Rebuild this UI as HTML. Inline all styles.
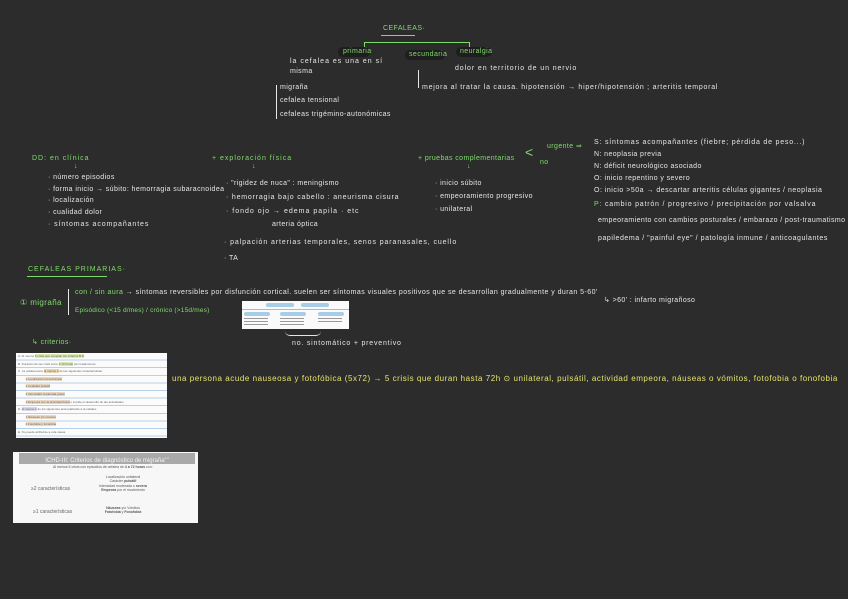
<!DOCTYPE html>
<html><head><meta charset="utf-8"><style>
body{margin:0;width:848px;height:599px;background:#2c2c2c;overflow:hidden;position:relative;font-family:"Liberation Sans",sans-serif;}
.t{position:absolute;white-space:nowrap;color:#e6e6e6;font-size:7px;line-height:8px;letter-spacing:0.4px}
.g{color:#7fdc6a}
.y{color:#e8e46a;font-size:8px;letter-spacing:0.55px}
.l{position:absolute;background:#7fdc6a}
.w{position:absolute;background:#e6e6e6}
.pill{position:absolute;background:#1e1e1e;border-radius:5px}
</style></head><body>

<div class="t g" style="left:383px;top:25px;">CEFALEAS·</div>
<div class="l" style="left:381px;top:35px;width:34px;height:1px"></div>
<div class="l" style="left:364px;top:42px;width:106px;height:1px"></div>
<div class="l" style="left:364px;top:42px;width:1px;height:5px"></div>
<div class="l" style="left:469px;top:42px;width:1px;height:5px"></div>
<div class="pill" style="left:338px;top:47px;width:32px;height:10px"></div>
<div class="pill" style="left:405px;top:50px;width:40px;height:10px"></div>
<div class="pill" style="left:456px;top:47px;width:36px;height:10px"></div>
<div class="t g" style="left:343px;top:48px;">primaria</div>
<div class="t g" style="left:409px;top:51px;">secundaria</div>
<div class="t g" style="left:460px;top:48px;">neuralgia</div>
<div class="t" style="left:290px;top:58px;letter-spacing:1px">la cefalea es una en sí</div>
<div class="t" style="left:290px;top:68px;">misma</div>
<div class="t" style="left:455px;top:65px;letter-spacing:0.9px">dolor en territorio de un nervio</div>
<div class="w" style="left:276px;top:85px;width:1px;height:34px"></div>
<div class="t" style="left:280px;top:84px;">migraña</div>
<div class="t" style="left:280px;top:97px;">cefalea tensional</div>
<div class="t" style="left:280px;top:111px;">cefaleas trigémino-autonómicas</div>
<div class="w" style="left:418px;top:70px;width:1px;height:18px"></div>
<div class="t" style="left:422px;top:84px;letter-spacing:0.75px">mejora al tratar la causa. hipotensión → hiper/hipotensión ; arteritis temporal</div>

<div class="t g" style="left:32px;top:155px;letter-spacing:1px">DD: en clínica</div>
<div class="t g" style="left:74px;top:163px;">↓</div>
<div class="t" style="left:48px;top:174px;">· número episodios</div>
<div class="t" style="left:48px;top:186px;">· forma inicio → súbito: hemorragia subaracnoidea</div>
<div class="t" style="left:48px;top:197px;">· localización</div>
<div class="t" style="left:48px;top:209px;">· cualidad dolor</div>
<div class="t" style="left:48px;top:221px;letter-spacing:0.9px">· síntomas acompañantes</div>

<div class="t g" style="left:212px;top:155px;letter-spacing:1px">+ exploración física</div>
<div class="t g" style="left:252px;top:163px;">↓</div>
<div class="t" style="left:226px;top:180px;">· "rigidez de nuca" : meningismo</div>
<div class="t" style="left:226px;top:194px;letter-spacing:0.8px">· hemorragia bajo cabello : aneurisma cisura</div>
<div class="t" style="left:226px;top:208px;letter-spacing:1px">· fondo ojo → edema papila · etc</div>
<div class="t" style="left:272px;top:221px;">arteria óptica</div>
<div class="t" style="left:224px;top:239px;letter-spacing:0.9px">· palpación arterias temporales, senos paranasales, cuello</div>
<div class="t" style="left:224px;top:255px;">· TA</div>

<div class="t g" style="left:418px;top:155px;">+ pruebas complementarias</div>
<div class="t g" style="left:547px;top:143px;">urgente ⇒</div>
<div class="t g" style="left:540px;top:159px;">no</div>
<div class="t g" style="left:525px;top:148px;font-size:14px">&lt;</div>
<div class="t g" style="left:467px;top:163px;">↓</div>
<div class="t" style="left:435px;top:180px;">· inicio súbito</div>
<div class="t" style="left:435px;top:193px;">· empeoramiento progresivo</div>
<div class="t" style="left:435px;top:206px;">· unilateral</div>

<div class="t" style="left:594px;top:139px;letter-spacing:0.8px">S: síntomas acompañantes (fiebre; pérdida de peso...)</div>
<div class="t" style="left:594px;top:151px;">N: neoplasia previa</div>
<div class="t" style="left:594px;top:163px;">N: déficit neurológico asociado</div>
<div class="t" style="left:594px;top:175px;">O: inicio repentino y severo</div>
<div class="t" style="left:594px;top:187px;letter-spacing:0.5px">O: inicio &gt;50a → descartar arteritis células gigantes / neoplasia</div>
<div class="t" style="left:594px;top:201px;letter-spacing:0.8px"><span class="g">P:</span> cambio patrón / progresivo / precipitación por valsalva</div>
<div class="t" style="left:598px;top:217px;letter-spacing:0.4px">empeoramiento con cambios posturales / embarazo / post-traumatismo</div>
<div class="t" style="left:598px;top:235px;letter-spacing:0.55px">papiledema / "painful eye" / patología inmune / anticoagulantes</div>

<div class="t g" style="left:28px;top:266px;letter-spacing:1px">CEFALEAS PRIMARIAS·</div>
<div class="l" style="left:27px;top:276px;width:80px;height:1px"></div>

<div class="t g" style="left:20px;top:299px;font-size:8px">① migraña</div>
<div class="w" style="left:68px;top:289px;width:1px;height:26px"></div>
<div class="t" style="left:75px;top:289px;letter-spacing:0.45px"><span class="g">con / sin aura</span> → síntomas reversibles por disfunción cortical. suelen ser síntomas visuales positivos que se desarrollan gradualmente y duran 5-60'</div>
<div class="t g" style="left:75px;top:307px;letter-spacing:0.2px;font-size:6.5px">Episódico (&lt;15 d/mes) / crónico (&gt;15d/mes)</div>
<div class="t" style="left:604px;top:297px;">↳ &gt;60' : infarto migrañoso</div>

<div style="position:absolute;left:242px;top:301px;width:107px;height:28px;background:#fafafa">
 <div style="position:absolute;left:24px;top:2px;width:28px;height:4px;background:#a8cde6;border-radius:2px"></div>
 <div style="position:absolute;left:59px;top:2px;width:28px;height:4px;background:#a8cde6;border-radius:2px"></div>
 <div style="position:absolute;left:0;top:8px;width:107px;height:1px;background:#e8a0a0"></div>
 <div style="position:absolute;left:2px;top:11px;width:26px;height:4px;background:#a8cde6;border-radius:2px"></div>
 <div style="position:absolute;left:38px;top:11px;width:26px;height:4px;background:#a8cde6;border-radius:2px"></div>
 <div style="position:absolute;left:76px;top:11px;width:26px;height:4px;background:#a8cde6;border-radius:2px"></div>
 <div style="position:absolute;left:2px;top:17px;width:24px;height:8px;background:repeating-linear-gradient(#999 0 1px,transparent 1px 3px)"></div>
 <div style="position:absolute;left:38px;top:17px;width:24px;height:8px;background:repeating-linear-gradient(#999 0 1px,transparent 1px 3px)"></div>
 <div style="position:absolute;left:76px;top:17px;width:24px;height:6px;background:repeating-linear-gradient(#999 0 1px,transparent 1px 3px)"></div>
</div>
<div style="position:absolute;left:285px;top:331px;width:36px;height:4px;border-bottom:1px solid #e6e6e6;border-radius:0 0 18px 18px"></div>
<div class="t" style="left:292px;top:340px;letter-spacing:0.8px">no. sintomático + preventivo</div>

<div class="t g" style="left:32px;top:339px;">↳ criterios·</div>

<div style="position:absolute;left:16px;top:353px;width:151px;height:85px;background:#fbfbfb;background-image:repeating-linear-gradient(transparent 0 6.6px,#b8cfe8 6.6px 7.6px);">
 <div class="t" style="left:2px;top:0;font-size:3px;line-height:7.6px;color:#666;letter-spacing:0">A. Al menos <span style="background:#d8eab0">5 crisis que cumplan los criterios B-D</span><br>B. Duración de las crisis entre <span style="background:#d8eab0">4-72 horas</span> (sin tratamiento)<br>C. La cefalea tiene <span style="background:#e8d8b0">al menos 2</span> de las siguientes características:<br>&nbsp;&nbsp;&nbsp;&nbsp;&nbsp;&nbsp;&nbsp;&nbsp;&nbsp;<span style="background:#ead8c0">1 Localización hemicraneal</span><br>&nbsp;&nbsp;&nbsp;&nbsp;&nbsp;&nbsp;&nbsp;&nbsp;&nbsp;<span style="background:#ead8c0">2 Cualidad pulsátil</span><br>&nbsp;&nbsp;&nbsp;&nbsp;&nbsp;&nbsp;&nbsp;&nbsp;&nbsp;<span style="background:#ead8c0">3 Intensidad moderada-grave</span><br>&nbsp;&nbsp;&nbsp;&nbsp;&nbsp;&nbsp;&nbsp;&nbsp;&nbsp;<span style="background:#ead8c0">4 Empeora con la actividad física</span> o impide el desarrollo de las actividades<br>D. <span style="background:#d8d8ea">Al menos 1</span> de los siguientes acompañando a la cefalea:<br>&nbsp;&nbsp;&nbsp;&nbsp;&nbsp;&nbsp;&nbsp;&nbsp;&nbsp;<span style="background:#ead8c0">1 Náuseas y/o vómitos</span><br>&nbsp;&nbsp;&nbsp;&nbsp;&nbsp;&nbsp;&nbsp;&nbsp;&nbsp;<span style="background:#ead8c0">2 Fotofobia y fonofobia</span><br>E. No puede atribuirse a otra causa</div>
</div>

<div class="t y" style="left:172px;top:375px;">una persona acude nauseosa y fotofóbica (5x72) → 5 crisis que duran hasta 72h ⊙ unilateral, pulsátil, actividad empeora, náuseas o vómitos, fotofobia o fonofobia</div>

<div style="position:absolute;left:13px;top:452px;width:185px;height:71px;background:#f7f7f7">
 <div style="position:absolute;left:6px;top:1px;width:176px;height:11px;background:#a9a9a9;color:#f4f4f4;font-size:6px;line-height:11px;text-align:center;white-space:nowrap">ICHD-III: Criterios de diagnóstico de migraña<sup style="font-size:3px">1,2</sup></div>
 <div style="position:absolute;left:40px;top:13px;font-size:3.5px;color:#555;white-space:nowrap">Al menos 5 crisis con episodios de cefalea de <b>4 a 72 horas</b> con:</div>
 <div style="position:absolute;left:18px;top:34px;font-size:5px;color:#666;white-space:nowrap">≥2 características</div>
 <div style="position:absolute;left:75px;top:23px;font-size:3.5px;color:#555;line-height:4.4px;text-align:center;width:70px">Localización unilateral<br>Carácter <b>pulsátil</b><br>Intensidad moderada o <b>severa</b><br><b>Empeora</b> por el movimiento</div>
 <div style="position:absolute;left:20px;top:57px;font-size:5px;color:#666;white-space:nowrap">≥1 características</div>
 <div style="position:absolute;left:75px;top:54px;font-size:3.5px;color:#555;line-height:4.4px;text-align:center;width:70px"><b>Náuseas</b> y/o Vómitos<br><b>Fotofobia</b> y <b>Fonofobia</b></div>
</div>
</body></html>
